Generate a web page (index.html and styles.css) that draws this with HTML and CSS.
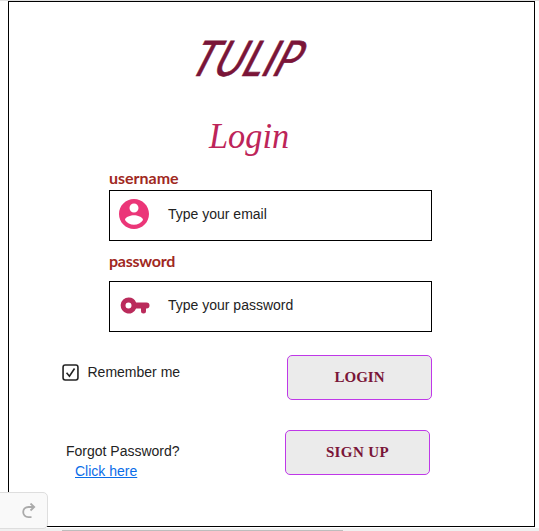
FILE: index.html
```html
<!DOCTYPE html>
<html lang="en">
<head>
<meta charset="utf-8">
<title>Tulip Login</title>
<link rel="stylesheet" href="styles.css">
</head>
<body>
<main class="frame">
  <h1 class="brand"><span class="brand-text">TULIP</span></h1>
  <h2 class="title"><span class="title-text">Login</span></h2>
  <form class="form">
    <div class="label"><span class="label-text">username</span></div>
    <div class="field">
      <svg class="icon user" viewBox="2 2 20 20"><path d="M12 2C6.48 2 2 6.48 2 12s4.48 10 10 10 10-4.480 10-10S17.520 2 12 2zm0 3c1.660 0 3 1.340 3 3s-1.340 3-3 3-3-1.340-3-3 1.340-3 3-3zm0 14.200c-2.500 0-4.710-1.280-6-3.220.030-1.990 4-3.080 6-3.080s5.970 1.090 6 3.080c-1.290 1.940-3.500 3.220-6 3.220z"/></svg>
      <span>Type your email</span>
    </div>
    <div class="label second"><span class="label-text">password</span></div>
    <div class="field">
      <svg class="icon key" viewBox="0 0 30 17"><path fill-rule="evenodd" d="M8.500 .5a8 8 0 1 0 7.600 11H21v2.500a2.500 2.500 0 0 0 5 0v-2.600h.5a3 3 0 0 0 0-6H16.100A8 8 0 0 0 8.500.5zm0 5a3 3 0 1 1 0 6 3 3 0 0 1 0-6z"/></svg>
      <span>Type your password</span>
    </div>
  </form>
  <div class="row">
    <label class="remember">
      <svg class="check" viewBox="0 0 16 16"><rect x="1" y="1" width="14" height="14" rx="2"/><path d="M4.300 8.300 7 11.500 11.800 4.200"/></svg>
      <span>Remember me</span>
    </label>
    <button class="button" type="button">LOGIN</button>
  </div>
  <div class="row signup-row">
    <div class="forgot">Forgot Password?<a class="link" href="#">Click here</a></div>
    <button class="button signup" type="button">SIGN UP</button>
  </div>
</main>
<div class="bottom"><div class="scroll"></div></div>
<div class="top-edge"></div>
<div class="toolbar">
  <svg class="redo" viewBox="0 0 14 16"><path d="M9.500 14.200H6.500C3.200 14.200 1.200 12 1.200 9.100S3.300 4 6.500 4H12M8.500 .5 12.200 4 8.500 7.500"/></svg>
</div>
</body>
</html>
```
FILE: styles.css
```css
* { box-sizing: border-box; }
body {
  margin: 0;
  width: 539px;
  height: 531px;
  padding-top: 1px;
  overflow: hidden;
  background: #fff;
  color: #232323;
  font: 14px/20px "Liberation Sans", Arial, sans-serif;
}
.frame {
  width: 527px;
  height: 526px;
  margin-left: 8px;
  border: 1px solid #000;
  background: #fff;
}
.brand, .title { margin: 0; font-weight: 400; white-space: nowrap; }
.brand {
  height: 60px;
  margin: 25px 0 0 180px;
  color: #7a1538;
  font: italic 400 49px/60px Lato, sans-serif;
}
.brand-text {
  display: inline-block;
  transform: skewX(-22deg) scaleX(.86);
  transform-origin: 0 78%;
  -webkit-text-stroke: .6px #7a1538;
}
.title {
  height: 46px;
  margin: 27px 0 0 200px;
  color: #bd2459;
  font: italic 400 35px/46px "Liberation Serif", serif;
}
.title-text {
  display: inline-block;
  transform: scaleX(.98);
  transform-origin: 0 50%;
}
.form { width: 323px; margin: 8px 0 0 100px; }
.label {
  height: 22px;
  color: #a02822;
  font: 700 16px/20px Lato, sans-serif;
}
.label-text { display: inline-block; }
.second { margin-top: 10px; margin-bottom: 8px; letter-spacing: -.25px; }
.field {
  display: flex;
  align-items: center;
  height: 51px;
  border: 1px solid #000;
  padding: 0 0 3px 9px;
}
.icon { margin-right: 19px; flex: none; }
.user { width: 30px; height: 30px; fill: #eb3678; }
.key { width: 30px; height: 17px; fill: #ba2b5b; margin: 0 18px 0 1px; }
.row {
  display: flex;
  justify-content: space-between;
  height: 45px;
  margin: 23px 102px 0 53px;
}
.remember { display: flex; height: 20px; margin-top: 7px; gap: 8.500px; align-items: center; }
.check { width: 17px; height: 17px; fill: none; stroke: #232323; stroke-width: 1.500; }
.button {
  width: 145px;
  height: 45px;
  padding: 0 0 2px;
  border: 1px solid #bf38e8;
  border-radius: 5px;
  background: #ebebeb;
  color: #7a1538;
  font: 700 15px/20px "Liberation Serif", serif;
}
.signup { letter-spacing: .4px; }
.signup-row { margin: 30px 104px 0 57px; }
.forgot { padding-top: 11px; }
.link { display: block; margin-left: 9px; color: #0a6de8; }
.bottom { height: 3px; margin-top: 1px; padding: 2px 0 0 62px; background: #f0f0f0; }
.scroll { width: 281px; height: 1px; background: #bdbdbd; }
.top-edge { position: absolute; top: 0; left: 0; width: 539px; height: 1px; background: #e0e0e0; }
.toolbar {
  position: absolute;
  left: -5px;
  top: 492px;
  width: 53px;
  height: 37px;
  border: 1px solid #dedede;
  border-radius: 5px;
  background: #f9f9f9;
}
.redo { display: block; width: 14px; height: 16px; margin: 10px 0 0 26px; fill: none; stroke: #aaa; stroke-width: 1.800; }
```
